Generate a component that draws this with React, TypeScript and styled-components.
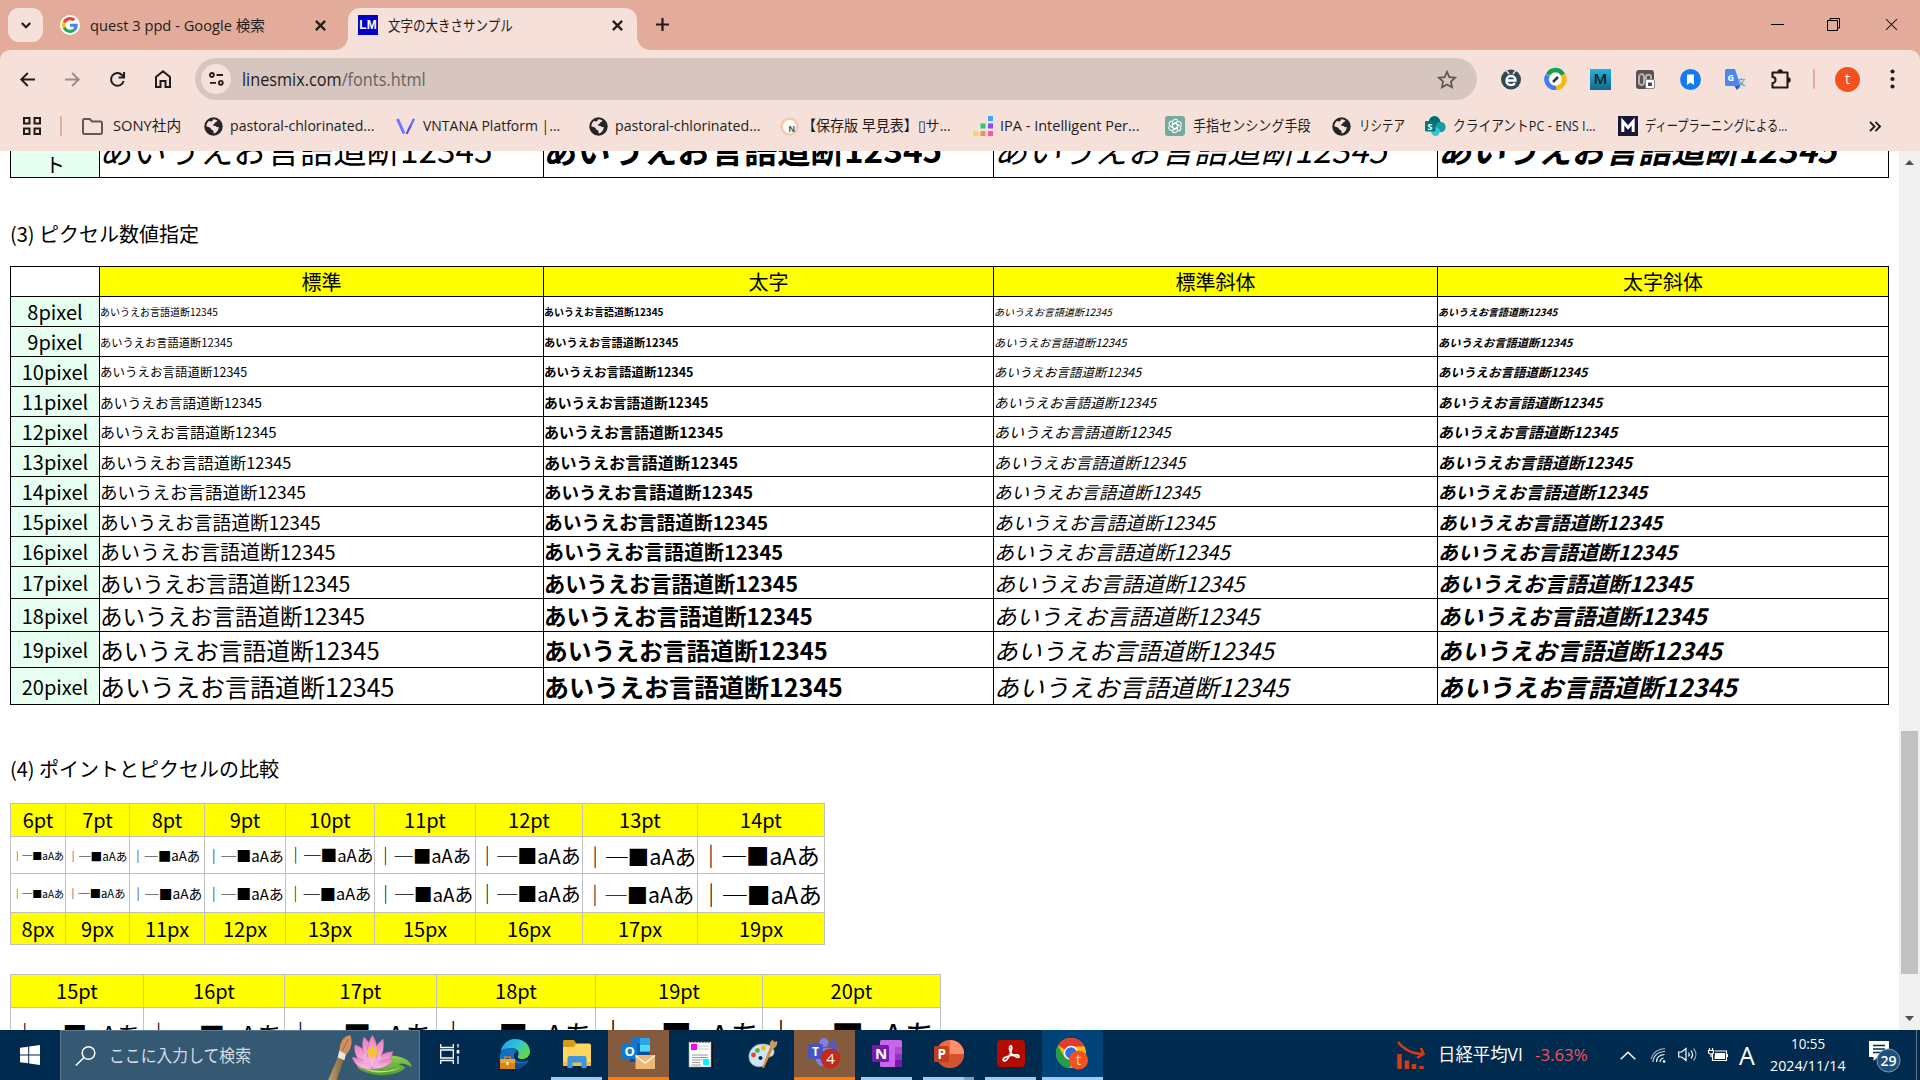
import React, { useLayoutEffect, useRef, useState } from 'react';
import styled, { createGlobalStyle } from 'styled-components';

const GlobalStyle = createGlobalStyle`
  *, *::before, *::after { box-sizing: border-box; }
  html, body { margin: 0; padding: 0; overflow: hidden; background: #fff; }
  svg { display: block; flex: none; overflow: visible; }
`;

const UI = `"Open Sans", "Noto Sans CJK JP", sans-serif`;
const CJK = `"Noto Sans CJK JP", sans-serif`;

/* ---------- text that is condensed to a given advance ---------- */

const FitBox = styled.span<{ $w: number; $size: number; $color?: string }>`
  display: block;
  flex: none;
  width: ${(p) => p.$w}px;
  font-family: ${UI};
  font-size: ${(p) => p.$size}px;
  line-height: 1.4;
  color: ${(p) => p.$color || '#1f1c1b'};
  white-space: nowrap;
`;
const FitInner = styled.span`
  display: inline-block;
  transform-origin: 0 50%;
`;

function Fit({ w, size = 15, color, children }: { w: number; size?: number; color?: string; children: React.ReactNode }) {
  const ref = useRef<HTMLSpanElement>(null);
  const [scale, setScale] = useState(1);
  useLayoutEffect(() => {
    if (ref.current && ref.current.offsetWidth) setScale(w / ref.current.offsetWidth);
  }, [w]);
  return (
    <FitBox $w={w} $size={size} $color={color}>
      <FitInner ref={ref} style={{ transform: `scaleX(${scale})` }}>{children}</FitInner>
    </FitBox>
  );
}

/* ---------- frame ---------- */

const Screen = styled.div`
  width: 1920px;
  height: 1080px;
  display: flex;
  flex-direction: column;
  overflow: hidden;
  font-family: ${UI};
`;

const Slot = styled.div<{ $w: number; $ml?: number }>`
  width: ${(p) => p.$w}px;
  margin-left: ${(p) => p.$ml || 0}px;
  flex: none;
  display: flex;
  align-items: center;
  justify-content: center;
`;
const Spring = styled.div`
  flex: 1;
`;

/* ---------- tab strip ---------- */

const TabStrip = styled.div`
  height: 50px;
  flex: none;
  display: flex;
  background: #e3ab9a;
  padding-left: 8px;
`;
const TabSearch = styled.div`
  width: 35px;
  height: 34px;
  margin-top: 8px;
  border-radius: 11px;
  background: #f5e0da;
  display: flex;
  align-items: center;
  justify-content: center;
`;
const Tab = styled.div<{ $active?: boolean; $w: number; $ml: number; $pl: number }>`
  position: relative;
  width: ${(p) => p.$w}px;
  margin: 8px 0 0 ${(p) => p.$ml}px;
  height: 42px;
  padding: 0 0 8px ${(p) => p.$pl}px;
  display: flex;
  align-items: center;
  border-radius: 12px 12px 0 0;
  background: ${(p) => (p.$active ? '#f5e0da' : 'transparent')};
  &::before, &::after {
    content: '';
    display: ${(p) => (p.$active ? 'block' : 'none')};
    position: absolute;
    bottom: 0;
    width: 13px;
    height: 13px;
  }
  &::before {
    left: -13px;
    background: radial-gradient(circle at 0 0, transparent 12.5px, #f5e0da 13px);
  }
  &::after {
    right: -13px;
    background: radial-gradient(circle at 100% 0, transparent 12.5px, #f5e0da 13px);
  }
`;
const GoogleDisc = styled.div`
  width: 20px;
  height: 20px;
  border-radius: 50%;
  background: #fff;
  display: flex;
  align-items: center;
  justify-content: center;
`;
const LmIcon = styled.div`
  width: 20px;
  height: 20px;
  background: #0000c8;
  color: #fff;
  font: bold 12px/21px "Liberation Sans", sans-serif;
  text-align: center;
`;
const StripControl = styled.div<{ $w: number }>`
  width: ${(p) => p.$w}px;
  height: 49px;
  display: flex;
  align-items: center;
  justify-content: center;
`;

/* ---------- toolbar ---------- */

const ToolbarBack = styled.div`
  flex: none;
  background: #e3ab9a;
`;
const Toolbar = styled.div`
  height: 58px;
  display: flex;
  align-items: center;
  background: #f5e0da;
  border-radius: 10px 10px 0 0;
  padding-left: 5px;
`;
const Omnibox = styled.div`
  width: 1282px;
  height: 42px;
  margin-left: 10px;
  flex: none;
  display: flex;
  align-items: center;
  border-radius: 21px;
  background: #d6c6bf;
  padding-left: 6px;
`;
const SiteInfo = styled.div`
  width: 30px;
  height: 30px;
  border-radius: 50%;
  background: #f5e0da;
  display: flex;
  align-items: center;
  justify-content: center;
  margin-right: 11px;
`;
const Separator = styled.div<{ $ml: number }>`
  width: 2px;
  height: 20px;
  flex: none;
  border-radius: 1px;
  margin-left: ${(p) => p.$ml}px;
  background: #e3ab9a;
`;
const Avatar = styled.div`
  width: 25px;
  height: 25px;
  border-radius: 50%;
  background: #f4511e;
  color: #fff;
  font: 14px/24px ${UI};
  text-align: center;
`;
const Maya = styled.div`
  width: 21px;
  height: 21px;
  background: linear-gradient(#21b4e2, #14688a);
  color: #0a1a22;
  font: 600 15px/19px ${UI};
  text-align: center;
`;

const Bookmarks = styled.div`
  height: 43px;
  flex: none;
  display: flex;
  align-items: center;
  background: #f5e0da;
  padding: 0 0 7px 22px;
`;

/* ---------- page ---------- */

const Viewport = styled.div`
  height: 879px;
  flex: none;
  display: flex;
  background: #fff;
`;
const Page = styled.div`
  width: 1899px;
  padding-left: 10px;
  overflow: hidden;
  font-family: ${CJK};
  font-size: 20px;
  line-height: 29px;
  color: #000;
`;
const Heading = styled.div<{ $top: number; $bottom: number }>`
  margin: ${(p) => p.$top}px 0 ${(p) => p.$bottom}px;
  height: 29px;
`;
const SizeTable = styled.div<{ $rows: string; $top?: number }>`
  display: grid;
  width: 1879px;
  margin-top: ${(p) => p.$top || 0}px;
  padding: 1px;
  gap: 1px;
  background: #000;
  grid-template-columns: 88px 443px 449px 443px 450px;
  grid-template-rows: ${(p) => p.$rows};
`;
const HeadCell = styled.div<{ $blank?: boolean }>`
  background: ${(p) => (p.$blank ? '#fff' : '#ff0')};
  text-align: center;
`;
const NameCell = styled.div<{ $drop?: number }>`
  background: #e6fff0;
  padding-top: ${(p) => p.$drop || 0}px;
  display: flex;
  align-items: center;
  justify-content: center;
  text-align: center;
`;
const SampleCell = styled.div<{ $size: number; $bold: boolean; $italic: boolean }>`
  background: #fff;
  display: flex;
  align-items: center;
  overflow: hidden;
  white-space: nowrap;
  font-size: ${(p) => p.$size}px;
  line-height: normal;
  font-weight: ${(p) => (p.$bold ? 700 : 400)};
  font-style: ${(p) => (p.$italic ? 'italic' : 'normal')};
`;
const CompareTable = styled.div<{ $cols: string; $rows: string; $top?: number }>`
  display: inline-grid;
  vertical-align: top;
  margin-top: ${(p) => p.$top || 0}px;
  padding: 1px;
  gap: 1px;
  background: #c0c0c0;
  grid-template-columns: ${(p) => p.$cols};
  grid-template-rows: ${(p) => p.$rows};
`;
const UnitCell = styled.div<{ $lift?: number }>`
  background: #ff0;
  padding-bottom: ${(p) => p.$lift || 0}px;
  display: flex;
  align-items: center;
  justify-content: center;
`;
const GlyphCell = styled.div<{ $size: number }>`
  background: #fff;
  display: flex;
  align-items: center;
  padding-left: 1.25px;
  white-space: nowrap;
  font-size: ${(p) => p.$size}px;
  line-height: normal;
`;

const ScrollBar = styled.div`
  width: 21px;
  background: #f0f0f0;
  display: flex;
  flex-direction: column;
  align-items: center;
  padding: 8px 0 8px;
`;
const Thumb = styled.div`
  width: 17px;
  height: 243px;
  margin: 565px 0 auto;
  background: #c1c1c1;
`;

/* ---------- taskbar ---------- */

const Taskbar = styled.div`
  height: 50px;
  flex: none;
  display: flex;
  background: #002b4e;
`;
const Start = styled.div`
  width: 60px;
  display: flex;
  align-items: center;
  justify-content: center;
`;
const SearchBox = styled.div`
  width: 360px;
  height: 50px;
  display: flex;
  align-items: center;
  background: #355873;
  border: 1px solid #5c7a90;
  border-bottom-width: 0;
  padding-left: 14px;
  overflow: hidden;
`;
const TaskButton = styled.div<{ $bg?: string; $line?: string; $inset?: number }>`
  width: 61px;
  margin-right: 1px;
  height: 50px;
  flex: none;
  display: flex;
  flex-direction: column;
  align-items: center;
  background: ${(p) => p.$bg || 'transparent'};
  &::after {
    content: '';
    height: 3px;
    align-self: stretch;
    margin: 0 ${(p) => p.$inset || 0}px;
    background: ${(p) => p.$line || 'transparent'};
  }
`;
const TaskIcon = styled.div`
  flex: 1;
  display: flex;
  align-items: center;
`;
const Clock = styled.div`
  width: 76px;
  margin-left: 15px;
  display: flex;
  flex-direction: column;
  align-items: center;
  gap: 1px;
  padding-bottom: 1px;
`;
const Tray = styled.div`
  width: 523px;
  display: flex;
  align-items: center;
`;
const ShowDesktop = styled.div`
  width: 6px;
  height: 50px;
  margin-left: 14px;
  border-left: 1px solid #5e7789;
`;

/* ---------- small icons ---------- */

const Cross = ({ s = 11, w = 2 }: { s?: number; w?: number }) => (
  <svg width={s} height={s} viewBox="0 0 10 10" stroke="#1f1c1b" strokeWidth={w} fill="none"><path d="M.8.8 9.2 9.2M9.2.8.8 9.2" /></svg>
);
const GoogleG = () => (
  <svg width="16" height="16" viewBox="0 0 48 48">
    <path fill="#ea4335" d="M24 9.5c3.5 0 6.700 1.200 9.200 3.600l6.900-6.900C35.900 2.400 30.500 0 24 0 14.600 0 6.500 5.400 2.600 13.200l8 6.200C12.400 13.700 17.700 9.500 24 9.500z" />
    <path fill="#4285f4" d="M47 24.600c0-1.600-.2-3.100-.4-4.600H24v9h12.900c-.6 3-2.200 5.500-4.700 7.200l7.700 6C44.400 38 47 31.800 47 24.600z" />
    <path fill="#fbbc05" d="M10.500 28.600a14.500 14.500 0 0 1 0-9.200l-8-6.200a24 24 0 0 0 0 21.600z" />
    <path fill="#34a853" d="M24 48c6.500 0 11.900-2.100 15.900-5.800l-7.700-6c-2.200 1.500-4.900 2.300-8.200 2.300-6.300 0-11.600-4.200-13.500-9.900l-8 6.200C6.500 42.600 14.600 48 24 48z" />
  </svg>
);
const Globe = () => (
  <svg width="19" height="19" viewBox="0 0 19 19">
    <circle cx="9.500" cy="9.500" r="9.200" fill="#232527" />
    <path fill="#f5e0da" d="M9.500 2.200c2 .2 3.200.8 4 1.600-.7 1.500-2.200 1-2.600 2.200-.3 1.200-1.600 1-2 2-.2 1.100 2.200.4 3.200 1.400 1 .9 1.700.2 2.700.8-.2 2.800-1.800 5.300-4.600 6.200-1-.4-.4-1.600-.8-2.500-.6-1.100-2.300-.7-2.500-2.100C6.700 10.300 4.500 9.800 2.300 9.200 2.500 7.300 3.200 5.500 4.800 4c1.200-.2 1.700.9 2.800.4 1-.6.9-1.500 1.900-2.200z" />
  </svg>
);
const Folder = () => (
  <svg width="21" height="17" viewBox="0 0 21 17" fill="none" stroke="#5f5b59" strokeWidth="2"><path d="M1 14.500v-12A1.500 1.500 0 0 1 2.500 1h5.200l2.300 2.500h8.500A1.500 1.500 0 0 1 20 5v9.500a1.500 1.500 0 0 1-1.500 1.500h-16A1.500 1.500 0 0 1 1 14.500z" /></svg>
);
const VMark = () => (
  <svg width="20" height="17" viewBox="0 0 20 17" fill="none" strokeWidth="3"><path d="M1.500 1 8 15.500" stroke="#6f74ff" /><path d="M18 .8 14 9" stroke="#6f74ff" strokeWidth="2.500" /><path d="m10.500 16 4-8" stroke="#4b55f5" strokeWidth="2.200" /></svg>
);
const NoteMark = () => (
  <svg width="19" height="19" viewBox="0 0 19 19"><circle cx="9.500" cy="9.500" r="8" fill="#fffaf4" stroke="#f6c9ab" strokeWidth="2.600" /><text x="8.500" y="14.500" fontSize="9" fontWeight="700" fontFamily="Liberation Sans" fill="#5b4c44">N</text></svg>
);
const Ipa = () => (
  <svg width="20" height="20" viewBox="0 0 20 20"><path fill="#43a5ff" d="M15 0h5v5h-5z" /><path fill="#1ed27c" d="M7.500 7.500h5v5h-5z" /><path fill="#8a4bff" d="M15 7.500h5v5h-5z" /><path fill="#ffd54a" d="M0 15h5v5H0z" /><path fill="#ff8a50" d="M7.500 15h5v5h-5z" /><path fill="#f95c93" d="M15 15h5v5h-5z" /></svg>
);
const Gpt = () => (
  <svg width="20" height="20" viewBox="0 0 20 20"><rect width="20" height="20" rx="3" fill="#74aa9c" /><g fill="none" stroke="#fff" strokeWidth="1.100">
    {[0, 60, 120, 180, 240, 300].map((a) => (<path key={a} transform={`rotate(${a} 10 10)`} d="M7.500 11.400V6.200a2.900 2.900 0 0 1 5.300-1.600M7.500 8.600 10 7.100l4.200 2.400" />))}
  </g></svg>
);
const SharePoint = () => (
  <svg width="21" height="20" viewBox="0 0 21 20"><circle cx="9.500" cy="5.800" r="5.800" fill="#036c70" /><circle cx="15.500" cy="11" r="5.200" fill="#1a9ba1" /><circle cx="10.500" cy="15.600" r="4.400" fill="#37c6d0" /><rect y="5" width="10.500" height="10.500" rx="1" fill="#03787c" /><text x="2.200" y="13.800" fontSize="9.500" fontWeight="700" fontFamily="Open Sans" fill="#fff">S</text></svg>
);
const MMark = () => (
  <svg width="20" height="20" viewBox="0 0 20 20"><rect width="20" height="20" fill="#17173a" /><path fill="none" stroke="#fff" strokeWidth="3" d="M4.800 16V5.500l5.200 6 5.200-6V16" /></svg>
);

const SAMPLE = 'あいうえお言語道断12345';
const STYLES = [
  { bold: false, italic: false },
  { bold: true, italic: false },
  { bold: false, italic: true },
  { bold: true, italic: true },
];
const PIXELS = [8, 9, 10, 11, 12, 13, 14, 15, 16, 17, 18, 19, 20];
const POINTS_A = [6, 7, 8, 9, 10, 11, 12, 13, 14];
const PX_A = [8, 9, 11, 12, 13, 15, 16, 17, 19];
const POINTS_B = [15, 16, 17, 18, 19, 20];
const GLYPHS = '｜─■aAあ';

function SampleRow({ size }: { size: number }) {
  return (
    <>
      {STYLES.map((s, i) => (
        <SampleCell key={i} $size={size} $bold={s.bold} $italic={s.italic}>{SAMPLE}</SampleCell>
      ))}
    </>
  );
}

const BOOKMARKS = [
  { ml: 20, iw: 21, icon: <Folder />, gap: 10, w: 68, text: 'SONY社内' },
  { ml: 23, iw: 19, icon: <Globe />, gap: 7, w: 144, text: 'pastoral-chlorinated...' },
  { ml: 22, iw: 19, icon: <VMark />, gap: 8, w: 137, text: 'VNTANA Platform |...' },
  { ml: 29, iw: 19, icon: <Globe />, gap: 7, w: 145, text: 'pastoral-chlorinated...' },
  { ml: 20, iw: 19, icon: <NoteMark />, gap: 3, w: 149, text: '【保存版 早見表】▯サ...' },
  { ml: 22, iw: 20, icon: <Ipa />, gap: 7, w: 139, text: 'IPA - Intelligent Per...' },
  { ml: 26, iw: 20, icon: <Gpt />, gap: 8, w: 118, text: '手指センシング手段' },
  { ml: 21, iw: 19, icon: <Globe />, gap: 8, w: 46, text: 'リシテア' },
  { ml: 20, iw: 20, icon: <SharePoint />, gap: 8, w: 143, text: 'クライアントPC - ENS I...' },
  { ml: 22, iw: 20, icon: <MMark />, gap: 7, w: 142, text: 'ディープラーニングによる...' },
];

const Lotus = () => (
  <svg width="89" height="43" viewBox="0 0 92 44">
    <defs>
      <linearGradient id="pet" x1="0" y1="0" x2="0" y2="1"><stop offset="0" stopColor="#e77fc2" /><stop offset="1" stopColor="#f6c7e6" /></linearGradient>
      <linearGradient id="leaf" x1="0" y1="0" x2="0" y2="1"><stop offset="0" stopColor="#8fd04e" /><stop offset="1" stopColor="#4f9c2e" /></linearGradient>
      <linearGradient id="brush" x1="0" y1="0" x2="1" y2="0"><stop offset="0" stopColor="#c3a36f" /><stop offset="1" stopColor="#85643c" /></linearGradient>
    </defs>
    <path fill="url(#brush)" d="M12 22 18 24 9 50H0z" /><path fill="#efe3da" d="m13 16 7 3-2 8-7-3z" />
    <path fill="#d08f60" d="M13 17C13 8 17 2 24 1c3 6 1 15-4 20z" /><path stroke="#a8633a" fill="none" d="M16 17 22 5" />
    <path fill="url(#leaf)" d="M31 32c3-8 18-11 33-10 12 0 22 4 24 12-6-3-11-5-14-3l7 3c-5 8-22 10-35 7-9-2-15-5-15-9z" />
    <path fill="#b6e37b" d="M36 33c10 6 28 7 40 1-8 7-33 8-40-1z" />
    <g fill="url(#pet)" stroke="#d862ae" strokeWidth=".6">
      <path d="M46 34C32 30 27 20 29 11c9 3 16 11 17 23z" /><path d="M47 34c12-1 20-8 21-16-9 0-18 6-21 16z" />
      <path d="M46 34C37 24 35 12 38 3c8 6 11 18 8 31z" /><path d="M47 34c9-7 13-18 11-29-8 6-13 16-11 29z" />
      <path d="M46 35c-7-11-5-25 1-34 6 9 7 23-1 34z" />
      <path d="M46 36c-11 1-17-4-20-12 9 0 16 4 20 12z" /><path d="M47 36c10 0 17-3 22-10-10-1-18 3-22 10z" />
    </g>
    <path fill="#f6c52d" d="m41 18 3-6 1 5 2-7 2 7 2-5 1 9-6 5z" />
    <path fill="#f3a9d8" d="M46 36c-7-3-10-9-9-16 6 3 9 9 9 16zM47 36c6-3 9-8 9-14-6 2-9 7-9 14z" />
  </svg>
);
const Edge = () => (
  <svg width="30" height="30" viewBox="0 0 30 30">
    <defs>
      <linearGradient id="eg" x1="0" y1="0" x2="1" y2=".5"><stop offset="0" stopColor="#1b9de2" /><stop offset=".55" stopColor="#2fc2df" /><stop offset="1" stopColor="#5fd94c" /></linearGradient>
    </defs>
    <path fill="#1470c4" d="M0 16C1 11 6 9 11 9c4 0 6 2 5.500 4-3 1-3.500 5-1 7.500 3 3 8 3 13 1C26 27 20 30 14 30 5 30-1 24 0 16z" />
    <path fill="#0c4c94" d="M9 15c-1 7 7 12 18 8-4 7-16 9-20 0-1-3 0-6 2-8z" />
    <path fill="url(#eg)" d="M.5 13C2 5 8 0 15 0c9 0 15 6 15 12.500 0 5-4 7.500-8 7.500-3 0-5-1-4-3 2-4-1-8-6.500-8C6 9 2 10.500.5 13z" />
    <path fill="#d98419" d="M0 20h15v10H0z" /><path fill="#f0a32c" d="M0 20h15v4H0z" /><path d="M5 20v-2h5v2" fill="none" stroke="#d98419" strokeWidth="1.500" /><path fill="#fff0c0" d="M6.500 23h2v3h-2z" />
  </svg>
);
const Explorer = () => (
  <svg width="28" height="28" viewBox="0 0 28 28"><path fill="#d79a12" d="M1 0h10l2 3v6H0V1z" /><path fill="#ffd75e" d="M13 3.500h13q2 0 2 2V26H0V7h11z" /><path fill="#f2be3c" d="M0 22h28v4H0z" /><path fill="#3d96dd" d="M4.500 28V18q0-2 2-2h15q2 0 2 2v10h-5v-5.500h-9V28z" /></svg>
);
const Outlook = () => (
  <svg width="33" height="31" viewBox="0 0 33 31"><path fill="#0a4fa0" d="M8 10h20v14H8z" /><path fill="#28a8ea" d="M9 0h19v14H9z" /><path fill="#0f78d4" d="M9 0h9v7H9z" /><path fill="#50d9ff" d="M18 7h10v6H18z" /><path fill="#0364b8" d="M9 6h9v8H9z" /><rect y="6" width="15" height="15" rx="1.500" fill="#0f78d4" /><text x="2.500" y="18" fontSize="13" fontWeight="700" fontFamily="Open Sans" fill="#fff">O</text><path fill="#edb877" d="M13.500 17H33v14H13.500z" /><path fill="none" stroke="#fff4e3" strokeWidth="1.500" d="m13.500 17.500 9.700 7.500 9.800-7.500" /></svg>
);
const NotePad = () => (
  <svg width="26" height="28" viewBox="0 0 26 28"><path fill="#111" d="M3 3h22v25H3z" /><path fill="#fdfdfd" stroke="#999" strokeWidth=".6" d="M1 2h22v25H1z" /><path stroke="#222" strokeWidth="2" strokeDasharray="1.500 1.500" d="M2 1.500h21" /><path stroke="#999" d="M4 15h16M4 17.500h16M4 20h10M4 22.500h8M4 25h9" /><path stroke="#ccc" d="M11 6h10M11 9h10" /><path fill="#f0f" d="M3 4h6v6H3z" /><path fill="#00f5ff" d="M15 19h6v6h-6z" /></svg>
);
const Paint = () => (
  <svg width="30" height="28" viewBox="0 0 30 28"><path fill="#cfe4f3" stroke="#7fa6c2" strokeWidth=".7" d="M1 18C0 11 6 4 14 4c7 0 13 3 12 9-1 5-6 3-8 6-2 2 1 5-3 7-5 2-13 0-14-8z" /><circle cx="5.500" cy="15" r="2.400" fill="#e4472f" /><circle cx="9.500" cy="10.500" r="2.400" fill="#5cb037" /><circle cx="15.500" cy="8" r="2.500" fill="#f6b91a" /><circle cx="12.500" cy="18" r="2" fill="#002b4e" /><path fill="#e58a24" d="m22 7 3 1.500L16 28h-2z" /><path fill="#c59a63" d="M22 7c-1-4 1-7 3-7l1 2 3-1c1 3-1 7-4 7.500z" /></svg>
);
const Teams = () => (
  <svg width="33" height="31" viewBox="0 0 33 31"><circle cx="16" cy="4.500" r="4.500" fill="#7b83eb" /><circle cx="25" cy="6" r="3.400" fill="#5059c9" /><path fill="#5059c9" d="M20 10h9v10h-9z" /><path fill="#7b83eb" d="M9 10h15v12q-3 6-9 6t-7-6z" /><rect y="6" width="15" height="15" rx="1.500" fill="#4b53bc" /><text x="4" y="18" fontSize="12" fontWeight="700" fontFamily="Open Sans" fill="#fff">T</text><circle cx="22.500" cy="20.500" r="10" fill="#c4291c" /><text x="18.200" y="26" fontSize="15" fontFamily="Open Sans" fill="#fff">4</text></svg>
);
const OneNote = () => (
  <svg width="30" height="27" viewBox="0 0 30 27"><rect x="8" width="22" height="27" rx="1.500" fill="#ca64ea" /><path fill="#ae4bd5" d="M23 7h7v7h-7z" /><path fill="#9332bf" d="M23 14h7v6h-7z" /><path fill="#7719aa" d="M23 20h7v7h-7z" /><rect y="5" width="17" height="17" rx="1.500" fill="#7719aa" /><text x="3" y="19" fontSize="15" fontWeight="700" fontFamily="Open Sans" fill="#fff">N</text></svg>
);
const PowerPoint = () => (
  <svg width="30" height="28" viewBox="0 0 30 28"><circle cx="16" cy="14" r="14" fill="#ed6c47" /><path fill="#ff8f6b" d="M16 0a14 14 0 0 1 14 14H16z" /><path fill="#d35230" d="M16 14h14a14 14 0 0 1-26 7z" /><rect y="6" width="15" height="16" rx="1.500" fill="#c43e1c" /><text x="3.500" y="19" fontSize="13.500" fontWeight="700" fontFamily="Open Sans" fill="#fff">P</text></svg>
);
const Acrobat = () => (
  <svg width="28" height="27" viewBox="0 0 28 27"><rect width="28" height="27" rx="4" fill="#b30b00" /><path fill="none" stroke="#fff" strokeWidth="1.700" d="M6.500 20.500c-1.500-2 3-4.200 7-5 5-1.300 8.500-.6 8.500 1 0 2-4.500.5-7.500-3-2-2.500-2.800-7-1-7.500 2.200-.5 1.200 5-1 9.500-2 4-4.500 6.500-6 5z" /></svg>
);
const ChromeIcon = () => (
  <svg width="33" height="32" viewBox="0 0 33 32"><circle cx="15" cy="15" r="15" fill="#fbc116" /><path fill="#e33b2e" d="M15 15 2 7.500A15 15 0 0 1 28.500 8.500H15z" /><path fill="#259c48" d="M2 7.500 9 20l6 2-3.500 8A15 15 0 0 1 2 7.500z" /><path fill="#259c48" d="m9 18 6 4 3 .5-4.500 7.500L8 28z" /><circle cx="15" cy="15" r="7.200" fill="#fff" /><circle cx="15" cy="15" r="5.800" fill="#2d6fe0" /><circle cx="22.500" cy="22" r="9.600" fill="#f4511e" /><text x="20" y="27" fontSize="14" fontFamily="Open Sans" fill="#ffd9cc">t</text></svg>
);

export default function App() {
  return (
    <Screen>
      <GlobalStyle />
      <TabStrip>
        <TabSearch>
          <svg width="10" height="7" viewBox="0 0 10 7" fill="none" stroke="#1f1c1b" strokeWidth="2.200"><path d="m.8 1 4.200 4.300L9.200 1" /></svg>
        </TabSearch>
        <Tab $w={289} $ml={5} $pl={12}>
          <GoogleDisc><GoogleG /></GoogleDisc>
          <Slot $w={10} />
          <Fit w={175} size={15}>quest 3 ppd - Google 検索</Fit>
          <Slot $w={20} $ml={45}><Cross /></Slot>
        </Tab>
        <Tab $active $w={289} $ml={11} $pl={10}>
          <LmIcon>LM</LmIcon>
          <Slot $w={10} />
          <Fit w={125} size={15}>文字の大きさサンプル</Fit>
          <Slot $w={20} $ml={94}><Cross /></Slot>
        </Tab>
        <StripControl $w={50}>
          <svg width="13" height="13" viewBox="0 0 13 13" stroke="#1f1c1b" strokeWidth="2.200"><path d="M6.500 0v13M0 6.500h13" /></svg>
        </StripControl>
        <Spring />
        <StripControl $w={56}><svg width="13" height="13"><path d="M0 6.500h13" stroke="#000" /></svg></StripControl>
        <StripControl $w={57}><svg width="13" height="13" fill="none" stroke="#000"><path d="M.5 2.500h10v10H.5zM3 2V.500h9.500V10H11" /></svg></StripControl>
        <StripControl $w={58}><Cross s={13} w={0.8} /></StripControl>
      </TabStrip>

      <ToolbarBack>
        <Toolbar>
          <Slot $w={45}><svg width="15" height="15" viewBox="0 0 15 15" fill="none" stroke="#1f1c1b" strokeWidth="1.900"><path d="M15 7.500H1.500M7.800 1 1.300 7.500 7.800 14" /></svg></Slot>
          <Slot $w={45}><svg width="15" height="15" viewBox="0 0 15 15" fill="none" stroke="#9a8c88" strokeWidth="1.900"><path d="M0 7.500h13.500M7.200 1l6.500 6.500L7.200 14" /></svg></Slot>
          <Slot $w={45}><svg width="15" height="15" viewBox="0 0 16 16" fill="none" stroke="#1f1c1b" strokeWidth="2.100"><path d="M14.500 9.500A6.800 6.800 0 1 1 12.800 3.200L15 5.500" /><path d="M15 0v5.800H9.200" /></svg></Slot>
          <Slot $w={45}><svg width="16" height="18" viewBox="0 0 16 18" fill="none" stroke="#1f1c1b" strokeWidth="2"><path d="M1 7 8 1.300 15 7v10h-4.500v-6h-5v6H1z" /></svg></Slot>
          <Omnibox>
            <SiteInfo>
              <svg width="15" height="14" viewBox="0 0 15 14" fill="none" stroke="#1f1c1b" strokeWidth="1.800"><circle cx="2.900" cy="3" r="2" /><path d="M7.500 3H14M1 10.800h6" /><circle cx="11.800" cy="10.800" r="2" /></svg>
            </SiteInfo>
            <Fit w={184} size={17.500}>linesmix.com<span style={{ color: '#6b615e' }}>/fonts.html</span></Fit>
            <Slot $w={20} $ml={1011}>
              <svg width="20" height="19" viewBox="0 0 20 19" fill="none" stroke="#5c5552" strokeWidth="1.700"><path d="m10 1.800 2.400 5.300 5.800.6-4.300 3.900 1.200 5.700-5.100-2.900-5.100 2.900 1.200-5.700-4.300-3.900 5.800-.6z" /></svg>
            </Slot>
          </Omnibox>
          <Slot $w={45} $ml={11}><svg width="20" height="21" viewBox="0 0 20 21"><circle cx="10" cy="10.500" r="10" fill="#2f4858" /><path d="m5 1 3 4M15 1l-3 4" stroke="#f5e0da" strokeWidth="1.500" /><path d="M5.500 11.500h9c0-6-9-6-9 0 0 5.500 6.500 5.500 8.500 2.500" fill="none" stroke="#fff" strokeWidth="2.300" /></svg></Slot>
          <Slot $w={45}><svg width="21" height="21" viewBox="0 0 21 21" fill="none" strokeWidth="4.500"><path d="M3 5.700a8.300 8.300 0 0 1 15 0" stroke="#12a150" /><path d="M18.200 6.200A8.300 8.300 0 0 1 11 18.700" stroke="#fbb70a" /><path d="M2.700 6.200A8.300 8.300 0 0 0 11 18.700" stroke="#3f7cf4" /><circle cx="10.500" cy="10.500" r="6" fill="#fff" stroke="none" /><path d="m8 13 5-5" stroke="#333" strokeWidth="2.500" /></svg></Slot>
          <Slot $w={45}><Maya>M</Maya></Slot>
          <Slot $w={45}><svg width="19" height="19" viewBox="0 0 19 19"><rect width="18" height="19" rx="3" fill="#56524f" /><path d="M3 12V8c0-5 5-5 5-1v5c0 4-5 4-5 0M10 12V7c0-3 5-3 5 0v4" fill="none" stroke="#b7b2ae" strokeWidth="2" /><rect x="9.500" y="9.500" width="9" height="9" rx="1.500" fill="#fff" stroke="#8a8582" /><path fill="#4a4a4a" d="M12 12.500h4v3.500h-4z" /></svg></Slot>
          <Slot $w={45}><svg width="21" height="21" viewBox="0 0 21 21"><circle cx="10.500" cy="10.500" r="10.500" fill="#147bf5" /><path fill="#fff" d="M7 5.500h7v10.500l-3.500-2.500L7 16z" /></svg></Slot>
          <Slot $w={45}><svg width="21" height="21" viewBox="0 0 21 21"><path fill="#dfe3ea" d="M8 4h13v16H12z" /><path fill="#4a87f0" d="M1.500 0H10l5.500 17H1.500Q0 17 0 15.500V1.500Q0 0 1.500 0z" /><path fill="#2f52c4" d="M9.500 17h6l-3.500 4z" /><text x="2.500" y="11.800" fontSize="9" fontWeight="700" fontFamily="Open Sans" fill="#fff">G</text><text x="12.500" y="16" fontSize="8" fontFamily="Noto Sans CJK JP" fill="#65758a">文</text></svg></Slot>
          <Slot $w={46}><svg width="21" height="20" viewBox="0 0 21 20" fill="none" stroke="#1f1c1b" strokeWidth="2.100"><path d="M1.500 3.500H16.500V18.500H1.500v-4.500a3 3 0 0 0 0-6z" strokeLinejoin="round" /><path d="M7.500 3a1.700 1.700 0 0 1 3.400 0M17 9.300a1.700 1.700 0 0 1 0 3.400" fill="#1f1c1b" /></svg></Slot>
          <Separator $ml={9} />
          <Slot $w={25} $ml={20}><Avatar>t</Avatar></Slot>
          <Slot $w={20} $ml={22}><svg width="5" height="20" fill="#1f1c1b"><circle cx="2.500" cy="2.500" r="2.100" /><circle cx="2.500" cy="10" r="2.100" /><circle cx="2.500" cy="17.500" r="2.100" /></svg></Slot>
        </Toolbar>
      </ToolbarBack>

      <Bookmarks>
        <Slot $w={20}><svg width="18" height="18" fill="none" stroke="#1f1c1b" strokeWidth="2"><path d="M1 1h5.500v5.500H1zM11.500 1H17v5.500h-5.500zM1 11.500h5.500V17H1zM11.500 11.500H17V17h-5.500z" /></svg></Slot>
        <Separator $ml={18} />
        {BOOKMARKS.map((b, i) => (
          <React.Fragment key={i}>
            <Slot $w={b.iw} $ml={b.ml}>{b.icon}</Slot>
            <Slot $w={b.gap} />
            <Fit w={b.w} size={14.500}>{b.text}</Fit>
          </React.Fragment>
        ))}
        <Slot $w={12} $ml={82}><svg width="12" height="11" viewBox="0 0 12 11" fill="none" stroke="#1f1c1b" strokeWidth="1.900"><path d="m1 .8 4.500 4.700L1 10.200M6.500.8 11 5.500l-4.500 4.700" /></svg></Slot>
      </Bookmarks>

      <Viewport>
        <Page>
          <SizeTable $rows="58px" $top={-33}>
            <NameCell $drop={4}>20ポイント</NameCell>
            <SampleRow size={33.33} />
          </SizeTable>

          <Heading $top={41} $bottom={18}>(3) ピクセル数値指定</Heading>
          <SizeTable $rows="repeat(10, 29px) 31px 32px 35px 36px">
            <HeadCell $blank />
            {['標準', '太字', '標準斜体', '太字斜体'].map((t) => <HeadCell key={t}>{t}</HeadCell>)}
            {PIXELS.map((n) => (
              <React.Fragment key={n}>
                <NameCell>{n}pixel</NameCell>
                <SampleRow size={n * 1.25} />
              </React.Fragment>
            ))}
          </SizeTable>

          <Heading $top={49} $bottom={20}>(4) ポイントとピクセルの比較</Heading>
          <div>
            <CompareTable $cols="54px 63px 74px 80px 88px 100px 106px 114px 126px" $rows="32px 36px 38px 31px">
              {POINTS_A.map((n) => <UnitCell key={n} $lift={2}>{n}pt</UnitCell>)}
              {POINTS_A.map((n) => <GlyphCell key={n} $size={(n * 5) / 3}>{GLYPHS}</GlyphCell>)}
              {PX_A.map((n) => <GlyphCell key={n} $size={n * 1.25}>{GLYPHS}</GlyphCell>)}
              {PX_A.map((n) => <UnitCell key={n}>{n}px</UnitCell>)}
            </CompareTable>
          </div>
          <div>
            <CompareTable $cols="132px 140px 151px 158px 166px 177px" $rows="32px 52px" $top={29}>
              {POINTS_B.map((n) => <UnitCell key={n} $lift={2}>{n}pt</UnitCell>)}
              {POINTS_B.map((n) => <GlyphCell key={n} $size={(n * 5) / 3}>{GLYPHS}</GlyphCell>)}
            </CompareTable>
          </div>
        </Page>
        <ScrollBar>
          <svg width="9" height="7" viewBox="0 0 9 7"><path fill="#505050" d="M0 6 4.500 1 9 6z" /></svg>
          <Thumb />
          <svg width="9" height="7" viewBox="0 0 9 7"><path fill="#505050" d="M0 1h9L4.500 6z" /></svg>
        </ScrollBar>
      </Viewport>

      <Taskbar>
        <Start>
          <svg width="20" height="20" viewBox="0 0 20 20" fill="#fff"><path d="M0 2.800 8.200 1.700v7.800H0zM9.200 1.500 20 0v9.500H9.200zM0 10.500h8.200v7.800L0 17.200zM9.200 10.500H20V20L9.200 18.500z" /></svg>
        </Start>
        <SearchBox>
          <svg width="21" height="20" viewBox="0 0 21 20" fill="none" stroke="#fff" strokeWidth="1.500"><circle cx="13.500" cy="7" r="6.300" /><path d="M9 11.500.8 19.500" /></svg>
          <Slot $w={13} />
          <Fit w={142} size={17.500} color="#d5dde3">ここに入力して検索</Fit>
          <Slot $w={89} $ml={76}><Lotus /></Slot>
        </SearchBox>
        <Slot $w={2} />
        <TaskButton><TaskIcon>
          <svg width="25" height="20" fill="none" stroke="#fff" strokeWidth="1.300"><path d="M.7 0v3.500h12.600V0M.7 6h12.600v8H.7zM.7 20v-3.500h12.600V20M18 0v3.500M18 12v8" /><path d="M16.700 6h2.600v3.500h-2.600z" fill="#fff" stroke="none" /></svg>
        </TaskIcon></TaskButton>
        <TaskButton><TaskIcon><Edge /></TaskIcon></TaskButton>
        <TaskButton $line="#9fcbf5" $inset={5}><TaskIcon><Explorer /></TaskIcon></TaskButton>
        <TaskButton $bg="#845b3d" $line="#ff7a00"><TaskIcon><Outlook /></TaskIcon></TaskButton>
        <TaskButton><TaskIcon><NotePad /></TaskIcon></TaskButton>
        <TaskButton><TaskIcon><Paint /></TaskIcon></TaskButton>
        <TaskButton $bg="#845b3d" $line="#ff7a00"><TaskIcon><Teams /></TaskIcon></TaskButton>
        <TaskButton $line="#9fcbf5" $inset={5}><TaskIcon><OneNote /></TaskIcon></TaskButton>
        <TaskButton $line="linear-gradient(90deg, #9fcbf5 80%, #7e9fc0 80%)" $inset={5}><TaskIcon><PowerPoint /></TaskIcon></TaskButton>
        <TaskButton $line="#9fcbf5" $inset={5}><TaskIcon><Acrobat /></TaskIcon></TaskButton>
        <TaskButton $bg="#004378" $line="#9fcbf5"><TaskIcon><ChromeIcon /></TaskIcon></TaskButton>
        <Spring />
        <Tray>
          <svg width="28" height="28" viewBox="0 0 28 28" fill="none" stroke="#d13d13" strokeWidth="2.500"><path d="M1 1c7 9 15 12 25 12" /><path d="m24 7 2.500 6-6.500 4" /><path strokeWidth="4.500" d="M2.500 13v15M10 19.500V28M17 23v5M24.500 25v3" /></svg>
          <Slot $w={13} />
          <Fit w={85} size={18} color="#fff">日経平均VI</Fit>
          <Slot $w={12} />
          <Fit w={53} size={16.500} color="#f0525f">-3.63%</Fit>
          <Slot $w={16} $ml={32}><svg width="16" height="9" fill="none" stroke="#fff" strokeWidth="1.400"><path d="m.7 8.300 7.300-7 7.300 7" /></svg></Slot>
          <Slot $w={15} $ml={15}><svg width="15" height="15" fill="none" stroke="#fff" strokeWidth="1.200"><path d="M9 14c0-2 1.500-3.500 3.500-4M5.500 14c0-4 3-7 8-7.500" /><path stroke="#c3ced8" d="M2 14C2 8 7 3.500 14 3.500" /><path stroke="#8da3b5" d="M0 11C1.500 5 7 .7 14 .7" /><circle cx="13" cy="13.500" r="1.300" fill="#fff" stroke="none" /></svg></Slot>
          <Slot $w={19} $ml={12}><svg width="20" height="18" fill="none" stroke="#fff" strokeWidth="1.200"><path d="M.7 6h3L8 2.500v12L3.700 11h-3zM10.500 6.500q1.500 2 0 4M13 4.500q3 4 0 8" /><path stroke="#8da3b5" d="M15.500 2.500q5 6 0 12" /></svg></Slot>
          <Slot $w={20} $ml={11}><svg width="20" height="14" fill="none" stroke="#fff" strokeWidth="1.200"><path d="M4.500 6v6.500h14V3H7" /><path fill="#fff" d="M7 5h10v6H6.500zM18.500 6h1.500v3h-1.500z" stroke="none" /><path d="M1.500 0v2.500M4.500 0v2.500M.5 2.500h5V5q-2.500 2-5 0zM3 6v3" /></svg></Slot>
          <Slot $w={16} $ml={11}><Fit w={16} size={25} color="#fff">A</Fit></Slot>
          <Clock>
            <Fit w={34} size={15} color="#fff">10:55</Fit>
            <Fit w={76} size={15} color="#fff">2024/11/14</Fit>
          </Clock>
          <Slot $w={33} $ml={23}>
            <svg width="33" height="31" viewBox="0 0 33 31"><path fill="#fff" d="M0 1h20v16H9l-4.500 4V17H0z" /><path stroke="#002b4e" strokeWidth="1.500" d="M4 5.500h12M4 9h12M4 12.500h9" /><circle cx="19.500" cy="20.500" r="11.500" fill="#21517a" stroke="#7f9db5" /><text x="11.500" y="25.800" textLength="16" lengthAdjust="spacingAndGlyphs" fontSize="14.500" fontWeight="600" fontFamily="Open Sans" fill="#fff">29</text></svg>
          </Slot>
          <ShowDesktop />
        </Tray>
      </Taskbar>
    </Screen>
  );
}
